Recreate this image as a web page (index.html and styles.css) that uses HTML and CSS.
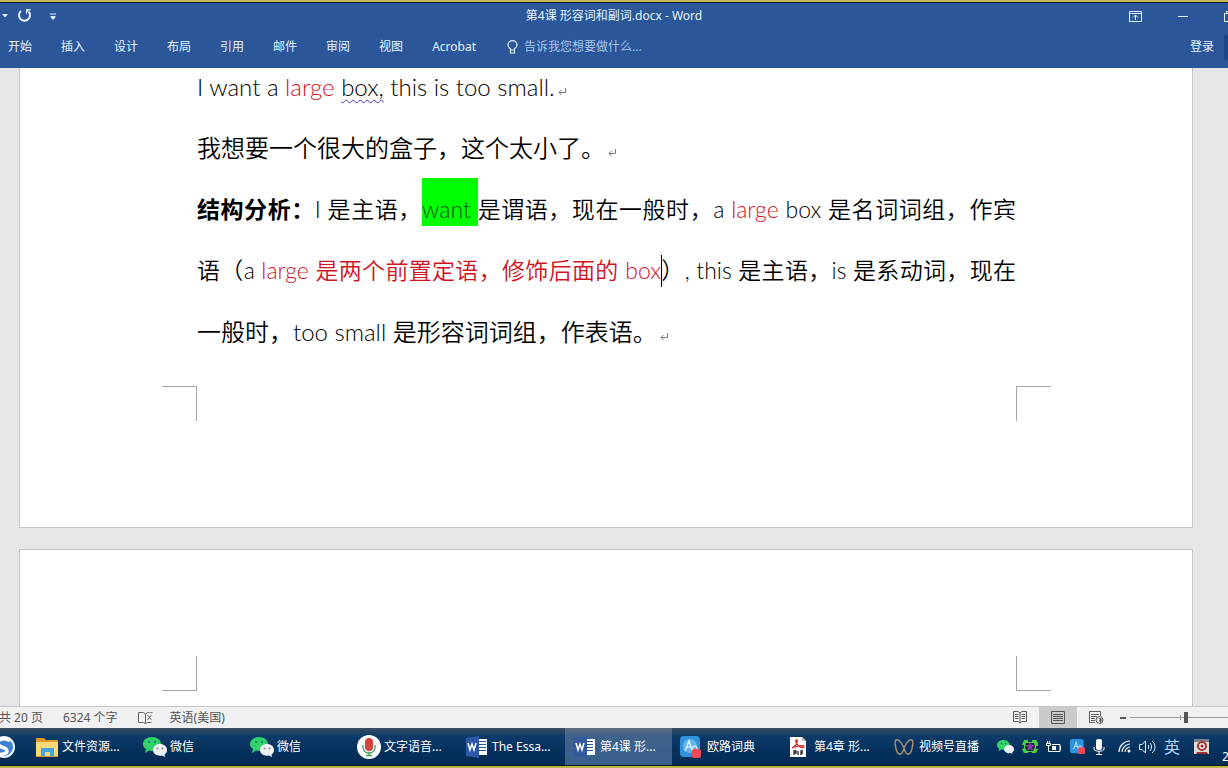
FILE: index.html
```html
<!DOCTYPE html>
<html lang="zh-CN">
<head>
<meta charset="utf-8">
<title>第4课 形容词和副词.docx - Word</title>
<link rel="stylesheet" href="styles.css">
</head>
<body>
<header class="ribbon">
  <div class="titlebar">
    <div class="quick">
      <button class="icon-btn" aria-label="撤消选项"><svg width="6" height="4"><path d="M0 0h6L3 3.500z" fill="#dff1ff"/></svg></button>
      <button class="icon-btn redo" aria-label="重复"><svg width="15" height="15" viewBox="0 0 15 15"><path d="M4 3A5.500 5.500 0 1 0 11.500 3.500" fill="none" stroke="#e4f4ff" stroke-width="2"/><path d="M7.500 1h6v1.500h-2.500L9 7V1z" fill="#e4f4ff"/></svg></button>
      <button class="icon-btn" aria-label="自定义快速访问工具栏"><svg width="6" height="7"><path d="M0 1h6M1 3.500h4" stroke="#dff1ff"/><path d="M0 3.500h6L3 7z" fill="#dff1ff"/></svg></button>
    </div>
    <h1 class="title">第4课 形容词和副词.docx - Word</h1>
    <div class="window-controls">
      <button class="icon-btn" aria-label="功能区显示选项"><svg width="13" height="11"><path d="M.5.500h12v10H.5zM0 2.500h13M6.500 9V4M4 6.500L6.500 4 9 6.500" fill="none" stroke="#e4f4ff"/></svg></button>
      <button class="icon-btn" aria-label="最小化"><svg width="10" height="11"><path d="M0 5.500h10" stroke="#e4f4ff"/></svg></button>
      <button class="icon-btn" aria-label="向下还原"><svg width="4" height="11"><path d="M4 2.500H.5v8H4M2.500 2V.5H4" fill="none" stroke="#e4f4ff"/></svg></button>
    </div>
  </div>
  <nav class="tabs">
    <button class="tab">开始</button>
    <button class="tab">插入</button>
    <button class="tab">设计</button>
    <button class="tab">布局</button>
    <button class="tab">引用</button>
    <button class="tab">邮件</button>
    <button class="tab">审阅</button>
    <button class="tab">视图</button>
    <button class="tab">Acrobat</button>
    <button class="tab tell"><svg width="11" height="14" viewBox="0 0 11 14"><path d="M3.500 10V8.800C2 7.800 1 6.500 1 5a4.500 4.300 0 0 1 9 0c0 1.500-1 2.800-2.500 3.800V10zM3.500 10v3h4v-3" fill="none" stroke="#dff1ff" stroke-width="1.200"/></svg>告诉我您想要做什么...</button>
    <button class="tab login">登录</button>
    <span class="share"></span>
  </nav>
</header>

<main class="workspace">
  <article class="page first">
    <div class="text">
      <p>I want a <span class="red">large</span> <span class="grammar">box,</span> this is too small.<svg class="mark" width="8" height="8" viewBox="0 0 8 8"><path d="M7.500 0v4.500H1M3.500 2L1 4.500 3.500 7" fill="none" stroke="#777"/></svg></p>
      <p>我想要一个很大的盒子，这个太小了。<svg class="mark" width="8" height="8" viewBox="0 0 8 8"><path d="M7.500 0v4.500H1M3.500 2L1 4.500 3.500 7" fill="none" stroke="#777"/></svg></p>
      <p class="analysis">
        <span class="line full"><b>结构分析：</b>I 是主语，<mark>want </mark>是谓语，现在一般时，a <span class="red">large</span> box 是名词词组，作宾</span>
        <span class="line full">语（a <span class="red">large 是两个前置定语，修饰后面的 box</span><span class="caret"></span>）, this 是主语，is 是系动词，现在</span>
        <span class="line">一般时，too small 是形容词词组，作表语。<svg class="mark" width="8" height="8" viewBox="0 0 8 8"><path d="M7.500 0v4.500H1M3.500 2L1 4.500 3.500 7" fill="none" stroke="#777"/></svg></span>
      </p>
    </div>
    <div class="crops bottom"><i></i><i></i></div>
  </article>
  <article class="page second">
    <div class="crops top"><i></i><i></i></div>
  </article>
</main>

<footer class="status">
  <span class="pages">共 20 页</span>
  <span class="words">6324 个字</span>
  <button class="icon-btn proof" aria-label="校对"><svg width="15" height="12" viewBox="0 0 15 12"><path d="M7.500 2L5.500.5H.5v10h5l2 1zM7.500 2l2-1.500h2M7.500 11.500l2-1h4M9.500 3l4 5M13.500 3l-4 5M12.500.5h2" fill="none" stroke="#666"/></svg></button>
  <span>英语(美国)</span>
  <div class="views">
    <button class="view" aria-label="阅读视图"><svg width="14" height="13" viewBox="0 0 14 13"><path d="M7 2L5 .5H.5v10H5l2 1.500 2-1.500h4.500V.5H9zM7 2v10M2 3.500h3.500M2 5.500h3.500M2 7.500h3.500M8.500 3.500H12M8.500 5.500H12M8.500 7.500H12" fill="none" stroke="#5c5c5c"/></svg></button>
    <button class="view active" aria-label="页面视图"><svg width="14" height="13"><path d="M.5.500h13v12H.5zM2 3.500h10M2 5.500h10M2 7.500h10M2 9.500h10" fill="none" stroke="#555"/></svg></button>
    <button class="view" aria-label="Web 版式视图"><svg width="15" height="13" viewBox="0 0 15 13"><path d="M6 11.500H.5V.5h11V5M2 3.500h8M2 5.500h6M2 7.500h4M2 9.500h4" fill="none" stroke="#5c5c5c"/><circle cx="10.500" cy="9" r="3.500" fill="#eee" stroke="#5c5c5c"/><path d="M8 7l3 1-1 2 2 2 1-3-1-2z" fill="#5c5c5c"/></svg></button>
    <button class="icon-btn minus" aria-label="缩小"><svg width="6" height="2"><path d="M0 1h6" stroke="#555" stroke-width="2"/></svg></button>
    <input class="zoom" type="range" min="0" max="100" value="57" aria-label="缩放">
  </div>
</footer>

<nav class="taskbar">
  <button class="icon-btn sogou" aria-label="搜狗浏览器"><svg width="15" height="22" viewBox="0 0 15 22"><circle cx="4" cy="11" r="11" fill="#f2f8ff"/><circle cx="4" cy="11" r="9" fill="#3c83d6"/><path d="M10 5C5 1-3 3-2 8c1 4 9 3 9 7 0 3-6 4-10 3" fill="none" stroke="#fff" stroke-width="3.500"/></svg></button>
  <button class="task"><svg width="24" height="22" viewBox="0 0 24 22"><path d="M1 2h8l2 2h12v17H1z" fill="#d99a2b"/><path d="M1 6h22v14H1z" fill="#fbd979"/><path d="M6 20v-8h13v8h-4v-4h-5v4z" fill="#45a4dd"/></svg><span>文件资源...</span></button>
  <button class="task"><svg width="24" height="22" viewBox="0 0 24 22"><path d="M9 1c5 0 9 3 9 7s-4 7-9 7l-3-.5L2 17l1-4C1 12 0 10 0 8c0-4 4-7 9-7z" fill="#32d16c"/><circle cx="6" cy="6" r="1" fill="#075"/><circle cx="12" cy="6" r="1" fill="#075"/><path d="M17 8c4 0 7 2.500 7 6 0 2-1 3.500-2.500 4.500l.5 2.500-3-1.500c-5 1-9-2-9-5.500S13 8 17 8z" fill="#eef2f3"/><circle cx="14.500" cy="12.500" r="1" fill="#888"/><circle cx="19.500" cy="12.500" r="1" fill="#888"/></svg><span>微信</span></button>
  <button class="task"><svg width="24" height="22" viewBox="0 0 24 22"><path d="M9 1c5 0 9 3 9 7s-4 7-9 7l-3-.5L2 17l1-4C1 12 0 10 0 8c0-4 4-7 9-7z" fill="#32d16c"/><circle cx="6" cy="6" r="1" fill="#075"/><circle cx="12" cy="6" r="1" fill="#075"/><path d="M17 8c4 0 7 2.500 7 6 0 2-1 3.500-2.500 4.500l.5 2.500-3-1.500c-5 1-9-2-9-5.500S13 8 17 8z" fill="#eef2f3"/><circle cx="14.500" cy="12.500" r="1" fill="#888"/><circle cx="19.500" cy="12.500" r="1" fill="#888"/></svg><span>微信</span></button>
  <button class="task"><svg width="24" height="24" viewBox="0 0 24 24"><circle cx="12" cy="12" r="12" fill="#fff"/><rect x="8" y="3" width="8" height="13" rx="4" fill="#d8433f"/><path d="M6 10v2c0 8 12 8 12 0v-2M12 18v3M9 20.500h6" fill="none" stroke="#3f9b5d" stroke-width="1.300"/></svg><span>文字语音...</span></button>
  <button class="task"><svg width="24" height="22" viewBox="0 0 24 22"><path d="M13 3h9v16h-9z" fill="#fff"/><path d="M14 5.500h7M14 8.500h7M14 11.500h7M14 14.500h7" stroke="#2b579a"/><path d="M1 2l13-2v22L1 20z" fill="#2b58a8"/><path d="M3 7l2 7 2-6 2 6 2-7" fill="none" stroke="#fff" stroke-width="1.500"/></svg><span>The Essa...</span></button>
  <button class="task active"><svg width="24" height="22" viewBox="0 0 24 22"><path d="M13 3h9v16h-9z" fill="#fff"/><path d="M14 5.500h6M14 8.500h6M14 11.500h6M14 14.500h6" stroke="#2b579a"/><path d="M1 2l13-2v22L1 20z" fill="#31599b"/><path d="M3 7l2 7 2-6 2 6 2-7" fill="none" stroke="#fff" stroke-width="1.500"/></svg><span>第4课 形...</span></button>
  <button class="task"><svg width="24" height="22" viewBox="0 0 24 22"><rect width="20" height="21" rx="4" fill="#2f93dc"/><circle cx="10" cy="10" r="7" fill="#61b5e9"/><path d="M5 15L9 5l3 9M6.500 11h4M12 14c0-5 5-5 5-1s-4 3-4 0" fill="none" stroke="#d9f0ff" stroke-width="1.500"/><rect x="12" y="13" width="9" height="9" rx="2" fill="#ed4b54"/></svg><span>欧路词典</span></button>
  <button class="task"><svg width="24" height="22" viewBox="0 0 24 22"><path d="M3 1h12l4 4v16H3z" fill="#fff"/><path d="M15 1v4h4z" fill="#bbb"/><path d="M5 12c4-2 6-6 5-8-1-1-2 1 0 4s5 4 7 3c1-2-6-2-12 1" fill="none" stroke="#d82a2e" stroke-width="1.300"/><path d="M7 19v-4h2v2H7M11 15v4M14 19v-4h2M14 17h2" fill="none" stroke="#222" stroke-width="1.300"/></svg><span>第4章 形...</span></button>
  <button class="task wide"><svg width="20" height="18" viewBox="0 0 20 18"><path d="M10 10C7 3 4 1 2 2s0 13 3 14 4-3 5-6c1 3 2 7 5 6s5-13 3-14-5 1-8 8z" fill="none" stroke="#a98c74" stroke-width="1.500"/></svg><span>视频号直播</span></button>
  <div class="tray">
    <svg width="17" height="16" viewBox="0 0 24 22"><path d="M9 1c5 0 9 3 9 7s-4 7-9 7l-3-.5L2 17l1-4C1 12 0 10 0 8c0-4 4-7 9-7z" fill="#32d16c"/><circle cx="6" cy="6" r="1" fill="#075"/><circle cx="12" cy="6" r="1" fill="#075"/><path d="M17 8c4 0 7 2.500 7 6 0 2-1 3.500-2.500 4.500l.5 2.500-3-1.500c-5 1-9-2-9-5.500S13 8 17 8z" fill="#eef2f3"/></svg>
    <svg width="16" height="14" viewBox="0 0 16 14"><path d="M2 0h4v2h4V0h4l2 3v3h-2v3h2l-2 4h-4v-1H6v1H2L0 9l2-1V5H0z" fill="#4bcf4b"/><path d="M4 3h8l1 4-2 4H5L3 8z" fill="#182538"/><path d="M8 2l1.500 3H13l-3 2 1 4-3-2-3 2 1-4-3-2h3.500z" fill="#8a3aa8"/></svg>
    <svg width="16" height="12" viewBox="0 0 16 12"><path d="M4 10.500h10v-7H6M14.500 5v4M2.500 5v5.500H5M1.500 0v2M3.500 0v2M.5 2.500h4v2h-4z" fill="none" stroke="#fff"/><path d="M6 5h4v4H6z" fill="#fff"/></svg>
    <svg width="15" height="15" viewBox="0 0 22 22"><rect width="20" height="21" rx="4" fill="#2f93dc"/><path d="M5 15L9 5l3 9M6.500 11h4M12 14c0-5 5-5 5-1s-4 3-4 0" fill="none" stroke="#b9e0ff" stroke-width="1.500"/><rect x="12" y="12" width="10" height="10" rx="2" fill="#ed4b54"/></svg>
    <svg width="12" height="16" viewBox="0 0 12 16"><rect x="3" width="6" height="11" rx="2" fill="#fff"/><path d="M1 8v2c0 3 10 3 10 0V8M6 12v3M3 15.500h6" fill="none" stroke="#fff"/></svg>
    <svg class="wifi" width="13" height="13" viewBox="0 0 13 13"><path d="M1 12C1 6 6 1 12 1M4 12c0-4 4-8 8-8M7 12c0-2 2-5 5-5" fill="none" stroke="#e6f2ff" stroke-width="1.200"/><circle cx="11" cy="11" r="1.500" fill="#fff"/></svg>
    <svg width="17" height="14" viewBox="0 0 17 14"><path d="M.5 4.500H3L6.500 1v12L3 9.500H.5zM9 5c1 1 1 3 0 4M11 3c2 2 2 6 0 8M13 1c4 3 4 9 0 12" fill="none" stroke="#e6f2ff"/></svg>
    <button class="ime">英</button>
    <svg class="recorder" width="15" height="15" viewBox="0 0 15 15"><path d="M0 0h15v15H0z" fill="#d9dfd5"/><path d="M0 0h15v3H0z" fill="#777f88"/><circle cx="8" cy="7" r="5" fill="#f3f3ef"/><circle cx="8" cy="7" r="4" fill="none" stroke="#a92c31" stroke-width="2"/><circle cx="8" cy="7" r="1.500" fill="#b01924"/><path d="M3 13h10l1 2H2z" fill="#a92c31"/></svg>
    <span class="clock">2</span>
  </div>
</nav>
</body>
</html>
```
FILE: styles.css
```css
* { box-sizing: border-box; }
body {
  margin: 0;
  height: 100vh;
  display: flex;
  flex-direction: column;
  overflow: hidden;
  border-top: 2px solid #c4b955;
  border-bottom: 2px solid #bdb64a;
  font: 12px/20px "Noto Sans", "Noto Sans CJK SC", sans-serif;
  background: #e6e6e8;
}
button {
  border: 0;
  padding: 0;
  background: none;
  color: inherit;
  font: inherit;
  white-space: nowrap;
}
svg { display: block; flex: none; }
.icon-btn { display: flex; align-items: center; }

.ribbon {
  flex: none;
  height: 66px;
  border-top: 1px solid #161d2c;
  background: #2b579a;
  color: #e4f4ff;
}
.titlebar {
  display: grid;
  grid-template-columns: 1fr auto 1fr;
  align-items: center;
  height: 26px;
}
.quick { display: flex; align-items: center; padding-left: 2px; }
.redo { margin: 0 18px 2px 9px; }
.title { margin: 0; font-size: 12px; font-weight: 400; }
.window-controls { display: flex; justify-content: flex-end; gap: 36px; }
.tabs { display: flex; align-items: center; gap: 29px; height: 36px; padding-left: 8px; }
.tell { display: flex; align-items: center; gap: 6px; margin-left: 2px; color: #a9c4ea; }
.login { margin-left: auto; }
.share { width: 4px; height: 25px; margin-left: -19px; background: #1c4684; }

.workspace {
  flex: 1;
  min-height: 0;
  overflow: hidden;
  padding: 0 35px 0 19px;
}
.page { background: #fff; border: 1px solid #c6c6c8; }
.first { border-top: 0; padding-bottom: 106px; }
.second { margin-top: 21px; height: 300px; padding-top: 106px; }
.text {
  padding: 0 176px 0 177px;
  font-family: Lato, "Noto Sans CJK SC", sans-serif;
  font-size: 24px;
  font-weight: 350;
  line-height: 61px;
  color: #000;
  white-space: nowrap;
}
.text p { margin: 0; }
.text p:first-child { margin-top: -12px; }
.text .analysis { margin-top: 1px; }
.line { display: block; }
.full { font-size: 23px; text-align-last: justify; }
.text b { font-weight: 700; }
.red { color: #d0141f; }
.grammar { text-decoration: underline wavy #3a3ac8 1px; text-underline-offset: 3px; }
mark { padding: 17px 0 3px; background: #0f0; color: #14501c; white-space: pre; }
.mark { display: inline-block; margin-left: 3px; }
.caret { display: inline-block; width: 1px; height: 32px; margin-right: -1px; background: #000; vertical-align: -8px; }
.crops { display: flex; justify-content: space-between; padding: 0 141px 0 142px; }
.crops i { width: 35px; height: 35px; border: 0 solid #a5a5a5; }
.bottom { margin-top: 24px; }
.bottom i { border-top-width: 1px; }
.top i { border-bottom-width: 1px; }
.crops i:first-child { border-right-width: 1px; }
.crops i:last-child { border-left-width: 1px; }

.status {
  flex: none;
  display: flex;
  align-items: center;
  height: 22px;
  border-top: 1px solid #c6c6c8;
  background: #f1f0f2;
  color: #555;
  white-space: nowrap;
}
.pages { margin-left: -1px; }
.words { margin-left: 20px; }
.proof { margin: 0 17px 0 20px; }
.views { display: flex; align-items: center; align-self: stretch; margin-left: auto; }
.view { display: flex; align-items: center; justify-content: center; width: 38px; height: 100%; }
.view.active { background: #cbcbcd; }
.minus { margin: 0 4px 0 5px; }
.zoom { appearance: none; width: 98px; height: 12px; margin: 0; background: linear-gradient(#999, #999) 0 50% / 100% 1px no-repeat, linear-gradient(#999, #999) 50px 50% / 1px 5px no-repeat; }
.zoom::-webkit-slider-thumb { appearance: none; width: 4px; height: 11px; background: #555; }

.taskbar {
  flex: none;
  display: flex;
  align-items: center;
  height: 38px;
  border-bottom: 1px solid #0a1420;
  background: linear-gradient(#3b4d63, #0d3b69 8px, #06325f 20px, #042b55);
  color: #fff;
  white-space: nowrap;
}
.sogou { width: 27px; }
.task { display: flex; flex: 0 1 107px; align-items: center; gap: 3px; height: 100%; padding-left: 8px; margin-right: 1px; min-width: 0; }
.task:nth-child(3), .task:nth-child(4), .task.active, .active ~ .task { margin-right: 0; }
.task.active { background: linear-gradient(#5c6d80, #3f628a 8px, #37608b); }
.task.wide { flex-basis: auto; gap: 5px; }
.tray { display: flex; align-items: center; gap: 8px; margin-left: auto; height: 100%; }
.wifi { margin-left: 5px; }
.ime { font-size: 16px; color: #b9d4fa; }
.recorder { margin-left: 6px; }
.clock { align-self: flex-end; width: 6px; margin-left: 5px; line-height: 16px; }
```
